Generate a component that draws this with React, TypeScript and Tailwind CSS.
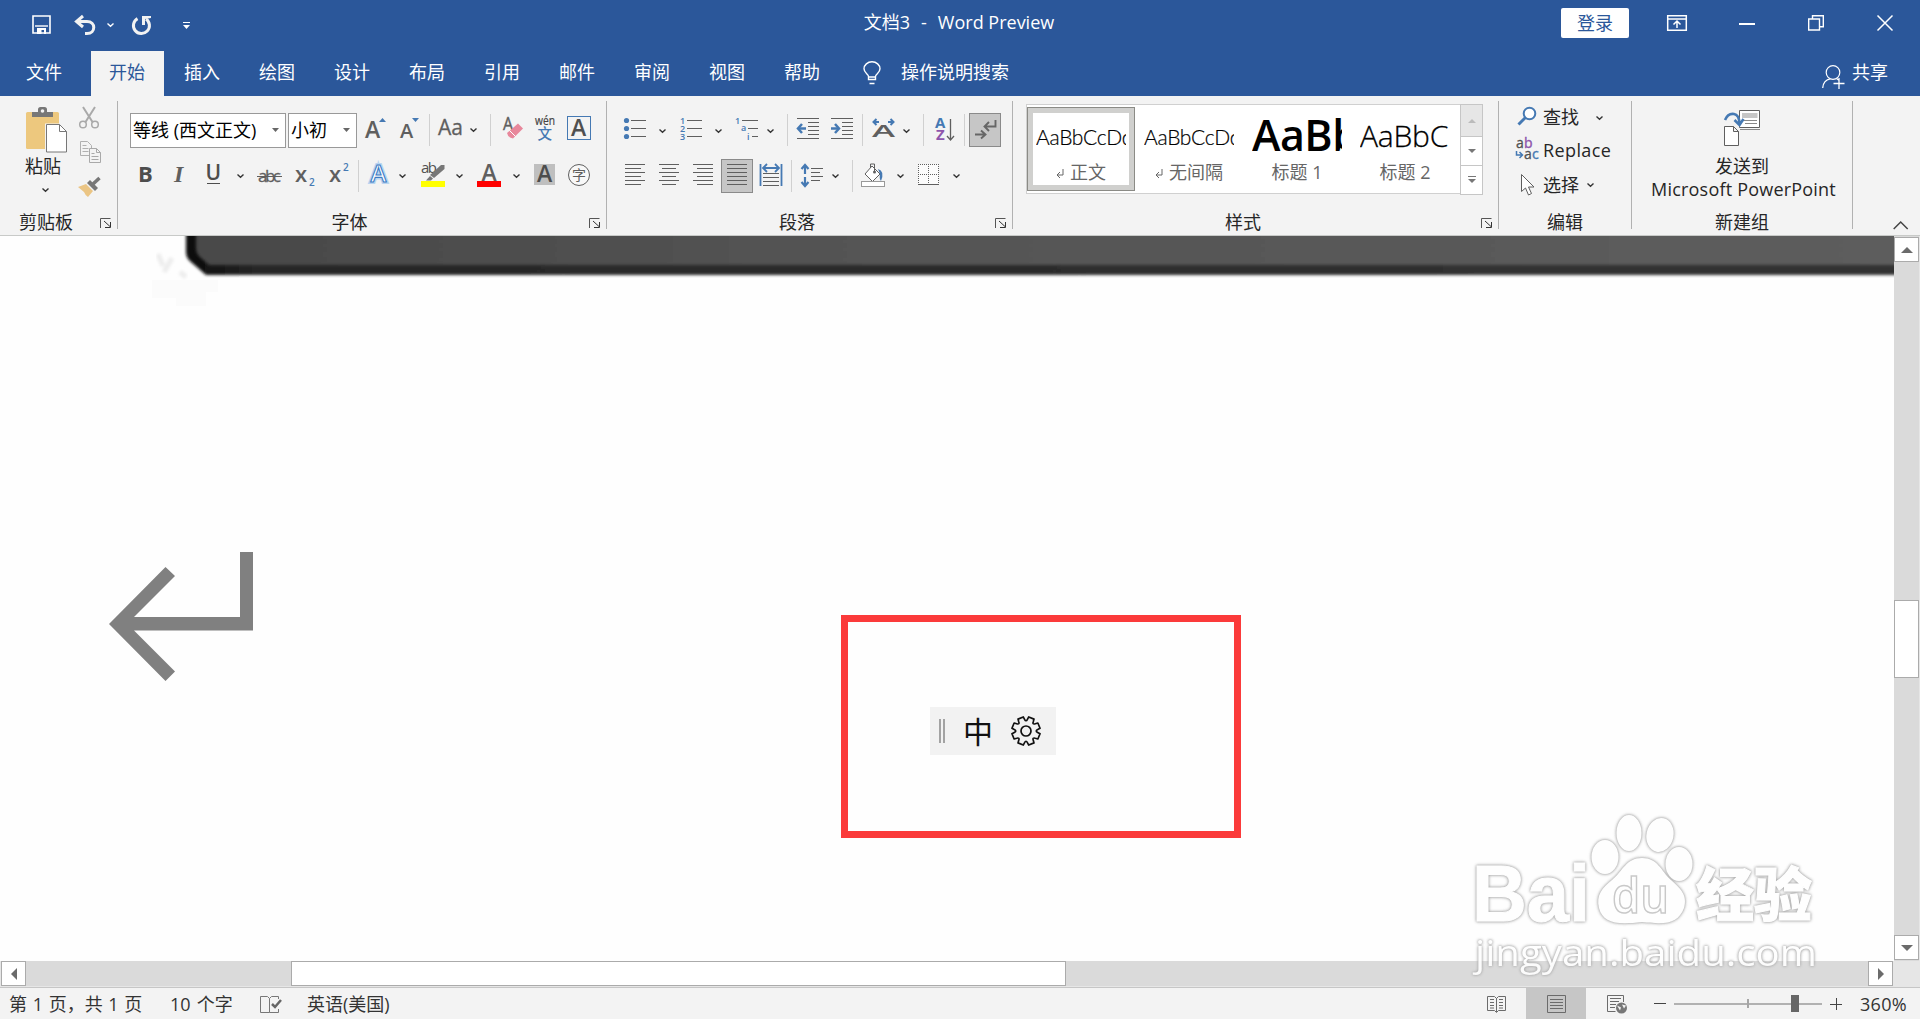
import type { ReactNode } from "react";

const BLUE = "#4579b3";
const GRAY = "#5f5f5f";
const UI = "'Open Sans', 'Noto Sans CJK SC', sans-serif";

function Svg({ w, h = 36, className = "", children }: { w: number; h?: number; className?: string; children: ReactNode }) {
  return (
    <svg width={w} height={h} viewBox={`0 0 ${w} ${h}`} className={`block shrink-0 overflow-visible ${className}`} fill="none">
      {children}
    </svg>
  );
}

function Chevron({ className = "", color = "#333" }: { className?: string; color?: string }) {
  return (
    <Svg w={7} h={4} className={className}>
      <path d="M.5 .5l3 2.7 3-2.7" stroke={color} strokeWidth="1.4" />
    </Svg>
  );
}

function Sep({ className = "" }: { className?: string }) {
  return <div className={`h-8 w-px shrink-0 bg-[#d0d0d0] ${className}`} />;
}

function Lines({ rows, x = 0, y = 0 }: { rows: number[][]; x?: number; y?: number }) {
  return (
    <g fill={GRAY}>
      {rows.map(([x1, y1, w], i) => (
        <rect key={i} x={x + x1} y={y + y1} width={w} height="1" />
      ))}
    </g>
  );
}

function Group({ label, width, launcher = false, children }: { label: string; width: string; launcher?: boolean; children: ReactNode }) {
  return (
    <div className={`flex h-[139px] shrink-0 flex-col ${width}`}>
      <div className="h-[113px]">{children}</div>
      <div className="flex h-[26px] items-center">
        <div className="flex-1 text-center leading-[26px]">{label}</div>
        {launcher && (
          <div className="w-[25px] pl-2">
            <Svg w={12} h={10} className="mt-[2px]">
              <path d="M.5 10V.5H10.5" stroke="#555" />
              <path d="M4 3l6 5.5M10.5 4v5.5H5" stroke="#333" />
            </Svg>
          </div>
        )}
      </div>
    </div>
  );
}

function GroupLine() {
  return <div className="mt-[5px] h-32 w-px shrink-0 bg-[#b1b1b1]" />;
}

function TitleBar() {
  return (
    <div className="flex h-[51px] items-start text-white">
      <div className="flex h-[51px] w-[357px]">
        <Svg w={20} h={20} className="mt-[15px] ml-8">
          <path d="M1 1h17v17H1z" stroke="#fff" strokeWidth="1.6" />
          <path d="M3 11h13" stroke="#fff" strokeWidth="1.4" />
          <path d="M5 13h9v6h-2v-4h-2.500v4H5z" fill="#fff" />
        </Svg>
        <Svg w={22} h={20} className="mt-[15px] ml-[22px]">
          <path d="M9 1L2.500 6.500 9 12" stroke="#f2f2f2" strokeWidth="3" />
          <path d="M3 6.500h10c9 0 9 12 0 12h-2" stroke="#f2f2f2" strokeWidth="3" />
        </Svg>
        <Chevron className="mt-[23px] ml-[11px]" color="#fff" />
        <Svg w={22} h={21} className="mt-[15px] ml-[17px]">
          <path d="M6.500 3.600A8 8 0 1 0 15 4" stroke="#f2f2f2" strokeWidth="3" />
          <path d="M11 1h9v2l-6 1v6h-3z" fill="#f2f2f2" />
        </Svg>
        <Svg w={8} h={8} className="mt-[22px] ml-[30px]">
          <path d="M0 0h7v1H0zM0 3h7L3.500 7z" fill="#fff" />
        </Svg>
      </div>
      <div className="flex h-[47px] flex-1 justify-center gap-[11px] leading-[45px]">
        <span>文档3</span>
        <span>-</span>
        <span>Word Preview</span>
      </div>
      <div className="flex h-[51px] w-[359px]">
        <div className="mt-2 h-[30px] w-[68px] rounded-[2px] bg-white text-center leading-[31px] text-[#2b579a]">登录</div>
        <Svg w={20} h={16} className="mt-[15px] ml-[38px]">
          <path d="M.7 .7h18.600v14.600H.7zM1 4h18M10 13V6.500M6.500 9.500L10 6l3.500 3.500" stroke="#fff" strokeWidth="1.5" />
        </Svg>
        <div className="mt-[23px] ml-[52px] h-[1.500px] w-4 bg-white" />
        <Svg w={16} h={16} className="mt-[15px] ml-[53px]">
          <path d="M.7 4h10.800v11H.7zM4.500 4V.7h10.800v11H12" stroke="#fff" strokeWidth="1.4" />
        </Svg>
        <Svg w={16} h={16} className="mt-[15px] ml-[53px]">
          <path d="M.5 .5l15 15M15.500 .5l-15 15" stroke="#fff" strokeWidth="1.5" />
        </Svg>
      </div>
    </div>
  );
}

const tabs = ["开始", "插入", "绘图", "设计", "布局", "引用", "邮件", "审阅", "视图", "帮助"];

function Tabs() {
  return (
    <div className="flex h-[45px] text-center leading-[43px] text-white">
      <div className="mr-[2px] w-[88px]">文件</div>
      {tabs.map((t, i) => (
        <div key={t} className="w-[75px] px-px">
          <div className={i === 0 ? "h-full bg-[#f3f3f3] pr-px text-[#2b579a]" : "pr-px"}>{t}</div>
        </div>
      ))}
      <Svg w={18} h={25} className="mt-[10px] ml-[23px]">
        <path d="M5.500 18.500v-3C5.500 13 1 12 1 7.800a8 7 0 0 1 16 0C17 12 12.500 13 12.500 15.500v3zM5.500 16h7M6.500 22.500h5" stroke="#fff" strokeWidth="1.4" />
      </Svg>
      <div className="ml-5">操作说明搜索</div>
      <Svg w={24} h={24} className="mt-[14px] ml-auto">
        <circle cx="11" cy="7.500" r="6.800" stroke="#fff" strokeWidth="1.2" />
        <path d="M.7 23c.3-5 3.500-8.500 7.500-9.200M14.500 13.500l2 1.500M17 13v11M11.500 18.500h11" stroke="#fff" strokeWidth="1.3" />
      </Svg>
      <div className="mr-8 ml-[6px]">共享</div>
    </div>
  );
}

function Clipboard() {
  return (
    <Group label="剪贴板" width="w-[117px]" launcher>
      <div className="flex pt-[11px]">
        <div className="w-[70px]">
          <Svg w={42} h={46} className="ml-[26px]">
            <rect y="5" width="33" height="37" rx="1.500" fill="#edc87e" />
            <path d="M6 10V5h6V2.500Q12 0 14.500 0h4Q21 0 21 2.500V5h6v5z" fill="#777" />
            <circle cx="16.500" cy="4" r="1.800" fill="#f3f3f3" />
            <path d="M19 16.500h22.500V46H19z" fill="#f3f3f3" />
            <path d="M20.500 17.500h13l7 7V45h-20z" fill="#fff" stroke="#777" />
            <path d="M33.500 17.500v7h7" stroke="#777" />
          </Svg>
          <div className="ml-[25px] leading-[27px]">粘贴</div>
          <Chevron className="mt-2 ml-[42px]" />
        </div>
        <div className="ml-2">
          <Svg w={22} h={22} className="ml-[1px]">
            <path d="M4 0l9.500 15M16 0L6.500 15" stroke="#a9a9a9" strokeWidth="2" />
            <circle cx="4" cy="17.500" r="3.300" stroke="#a9a9a9" strokeWidth="1.500" />
            <circle cx="16" cy="17.500" r="3.300" stroke="#a9a9a9" strokeWidth="1.500" />
          </Svg>
          <Svg w={22} h={22} className="mt-3 ml-[2px]">
            <path d="M.5 .5h7l4 4v10H.5zM2.500 4.500h4M2.500 7.500h6M2.500 10.500h6" stroke="#b0b0b0" />
            <path d="M9.500 7.500h7l4 4v10h-11zM16.500 7.500v4h4M11.500 12.500h3M11.500 15.500h7M11.500 18.500h7" fill="#f3f3f3" stroke="#a9a9a9" />
          </Svg>
          <Svg w={24} h={20} className="mt-[14px]">
            <path d="M0 10l8-3 7 7-5 6q-3-2-4-5z" fill="#ebc584" />
            <path d="M9 6l3-3 8 8-3 3z" fill="#777" />
            <path d="M15 7l6.500-6" stroke="#777" strokeWidth="3.500" />
          </Svg>
        </div>
      </div>
    </Group>
  );
}

function FontBox({ text, className }: { text: string; className: string }) {
  return (
    <div className={`flex h-[35px] shrink-0 items-center border border-[#999] bg-white pr-[6px] pl-[2px] leading-[32px] whitespace-nowrap ${className}`}>
      <span className="mb-px text-black">{text}</span>
      <Svg w={7} h={4} className="ml-auto">
        <path d="M0 0h7L3.500 4z" fill="#666" />
      </Svg>
    </div>
  );
}

function FontGroup() {
  return (
    <Group label="字体" width="w-[488px]" launcher>
      <div className="mt-4 flex h-9 items-center" style={{ fontFamily: UI }}>
        <FontBox text="等线 (西文正文)" className="ml-3 w-[156px]" />
        <FontBox text="小初" className="ml-[2px] w-[69px]" />
        <Svg w={24} className="ml-[6px]">
          <text x="2" y="26" fontSize="23" fontWeight="600" fill={GRAY}>A</text>
          <path d="M16 10h7l-3.500-4z" fill={BLUE} />
        </Svg>
        <Svg w={23} className="ml-[11px]">
          <text x="2" y="26" fontSize="20" fontWeight="600" fill={GRAY}>A</text>
          <path d="M14 6h7l-3.500 4z" fill={BLUE} />
        </Svg>
        <Sep className="ml-2" />
        <Svg w={26} className="ml-2">
          <text x="0" y="23" fontSize="21" fill={GRAY} stroke={GRAY} strokeWidth=".3" textLength="25">Aa</text>
        </Svg>
        <Chevron className="ml-[6px]" />
        <Sep className="ml-[13px]" />
        <Svg w={21} className="ml-3">
          <text x="0" y="18" fontSize="18" fill={GRAY} stroke={GRAY} strokeWidth=".4" textLength="10" lengthAdjust="spacingAndGlyphs">A</text>
          <path d="M4 21l11-9.500 5 5L10 26.500q-5-1-6-5.500z" fill="#e8879b" />
          <path d="M6.500 18.500l6 6" stroke="#fff" />
        </Svg>
        <Svg w={22} className="ml-[10px]">
          <text x="1" y="13" fontSize="12" fill="#444" stroke="#444" strokeWidth=".2" textLength="20" lengthAdjust="spacingAndGlyphs">wén</text>
          <text x="3.500" y="27" fontSize="14.500" fontWeight="500" fill={BLUE}>文</text>
        </Svg>
        <Svg w={24} className="ml-[11px]">
          <rect x=".5" y="4.500" width="23" height="23" stroke={BLUE} />
          <text x="4" y="24" fontSize="23" fontWeight="600" fill="#505050">A</text>
        </Svg>
      </div>
      <div className="mt-[10px] flex h-9 items-center" style={{ fontFamily: UI }}>
        <Svg w={16} className="ml-5">
          <text x="0" y="24" fontSize="22" fontWeight="700" fill="#4d4d4d">B</text>
        </Svg>
        <Svg w={14} className="ml-[18px]">
          <text x="2" y="24" fontSize="24" fontStyle="italic" fontWeight="700" fontFamily="'Liberation Serif', serif" fill={GRAY}>I</text>
        </Svg>
        <Svg w={16} className="ml-5">
          <text x="-.5" y="22" fontSize="21" fontWeight="600" fill="#4d4d4d">U</text>
          <path d="M1 25.500h13" stroke="#4d4d4d" />
        </Svg>
        <Chevron className="ml-[15px]" />
        <Svg w={26} className="ml-[13px]">
          <text x="1" y="24" fontSize="17" fill={GRAY} stroke={GRAY} strokeWidth=".3" textLength="23">abc</text>
          <path d="M0 18.500h25" stroke={GRAY} />
        </Svg>
        <Svg w={21} className="ml-3">
          <text x="0" y="24" fontSize="22" fontWeight="600" fill={GRAY}>x</text>
          <text x="14" y="28" fontSize="10" fontWeight="600" fill={BLUE}>2</text>
        </Svg>
        <Svg w={21} className="ml-[13px]">
          <text x="0" y="24" fontSize="22" fontWeight="600" fill={GRAY}>x</text>
          <text x="14" y="13" fontSize="10" fontWeight="600" fill={BLUE}>2</text>
        </Svg>
        <Sep className="ml-2" />
        <Svg w={20} className="ml-[9px]">
          <text x="2.500" y="24" fontSize="24" fontWeight="600" fill="#fff" stroke="#b9d4f0" strokeWidth="4">A</text>
          <text x="2.500" y="24" fontSize="24" fontWeight="600" fill="#fff" stroke="#3d7cc4" strokeWidth="1.100">A</text>
        </Svg>
        <Chevron className="ml-[11px]" />
        <Svg w={24} className="ml-[15px]">
          <text x="0" y="15" fontSize="15" fill="#505050" textLength="16">ab</text>
          <path d="M23.500 7v4L13 20l-4-3L20 7z" fill="#777" />
          <path d="M9 18l3 2.500-2 2H5z" fill="#777" />
          <rect y="23" width="24" height="6" fill="#ff0" />
        </Svg>
        <Chevron className="ml-[11px]" />
        <Svg w={24} className="ml-[14px]">
          <text x="4.500" y="23" fontSize="23" fontWeight="600" fill={GRAY}>A</text>
          <rect y="23" width="24" height="6" fill="#f00" />
        </Svg>
        <Chevron className="ml-3" />
        <Svg w={21} className="ml-[14px]">
          <rect y="6" width="21" height="21" fill="#bfbfbf" />
          <text x="3" y="24" fontSize="23" fontWeight="600" fill="#4d4d4d">A</text>
        </Svg>
        <Svg w={24} className="ml-3">
          <circle cx="12" cy="17" r="10.500" stroke={GRAY} fill="#f8f8f8" />
          <text x="5" y="22" fontSize="14" fill={GRAY}>字</text>
        </Svg>
      </div>
    </Group>
  );
}

function Arrow({ x, y, flip = false }: { x: number; y: number; flip?: boolean }) {
  return (
    <g transform={`translate(${x} ${y})${flip ? " scale(-1 1)" : ""}`} stroke={BLUE}>
      <path d="M0 0H8" strokeWidth="2.500" />
      <path d="M4-4.500L8 0 4 4.500" strokeWidth="2.500" />
    </g>
  );
}

const LEFT_ROWS = [[0, 6, 20], [0, 10, 16], [0, 14, 20], [0, 18, 16], [0, 22, 20], [0, 26, 16]];
const CENTER_ROWS = [[0, 6, 20], [3, 10, 14], [0, 14, 20], [3, 18, 14], [0, 22, 20], [3, 26, 14]];
const RIGHT_ROWS = [[0, 6, 20], [4, 10, 16], [0, 14, 20], [4, 18, 16], [0, 22, 20], [4, 26, 16]];
const FULL_ROWS = [[0, 5, 20], [0, 9, 20], [0, 13, 20], [0, 17, 20], [0, 21, 20], [0, 25, 20]];
const INDENT_ROWS = [[0, 6, 22], [11, 10, 11], [11, 14, 11], [11, 18, 11], [11, 22, 11], [0, 26, 22]];

function ParagraphGroup() {
  return (
    <Group label="段落" width="w-[405px]" launcher>
      <div className="mt-4 flex h-9 items-center" style={{ fontFamily: UI }}>
        <Svg w={22} className="ml-[17px]">
          <g fill={BLUE}>
            <circle cx="2.500" cy="8.500" r="2.600" />
            <circle cx="2.500" cy="16.500" r="2.600" />
            <circle cx="2.500" cy="24.500" r="2.600" />
          </g>
          <Lines rows={[[7, 8, 15], [7, 16, 15], [7, 24, 15]]} />
        </Svg>
        <Chevron className="mt-[2px] ml-[13px]" />
        <Svg w={22} className="ml-[14px]">
          <g fill={BLUE} fontSize="9" fontWeight="600">
            <text x="0" y="12">1</text>
            <text x="0" y="20">2</text>
            <text x="0" y="28">3</text>
          </g>
          <Lines rows={[[7, 8, 15], [7, 16, 15], [7, 24, 15]]} />
        </Svg>
        <Chevron className="mt-[2px] ml-[13px]" />
        <Svg w={23} className="ml-[13px]">
          <g fill={BLUE} fontSize="9" fontWeight="600">
            <text x="0" y="12">1</text>
            <text x="6" y="19">a</text>
            <text x="12" y="28">i</text>
          </g>
          <Lines rows={[[7, 8, 16], [13, 16, 10], [17, 24, 6]]} />
        </Svg>
        <Chevron className="mt-[2px] ml-[9px]" />
        <Sep className="ml-[13px]" />
        <Svg w={22} className="ml-[9px]">
          <Lines rows={INDENT_ROWS} />
          <Arrow x={9} y={16.500} flip />
        </Svg>
        <Svg w={22} className="ml-3">
          <Lines rows={INDENT_ROWS} />
          <Arrow x={0} y={16.500} />
        </Svg>
        <Sep className="ml-[9px]" />
        <Svg w={23} className="ml-[9px]">
          <path d="M7 10H1.500M4.500 7L1.500 10l3 3M16 10h5.500M18.500 7l3 3-3 3" stroke={BLUE} strokeWidth="2" />
          <text x="0" y="25" fontSize="16" fontWeight="600" fill={GRAY} textLength="23" lengthAdjust="spacingAndGlyphs">A</text>
        </Svg>
        <Chevron className="mt-[2px] ml-2" />
        <Sep className="ml-[13px]" />
        <Svg w={20} className="ml-[11px]">
          <text x="0" y="16" fontSize="15" fontWeight="700" fill={BLUE}>A</text>
          <text x="1" y="28" fontSize="15" fontWeight="700" fill="#8e55ac">Z</text>
          <path d="M15.500 7v21M12 24l3.500 4 3.500-4" stroke={GRAY} strokeWidth="1.300" />
        </Svg>
        <Sep className="ml-[9px]" />
        <div className="ml-1 h-[34px] w-8 border border-[#8a8a8a] bg-[#c6c6c6]">
          <Svg w={30} h={32}>
            <path d="M25.500 6v6.500H15M19 8l-4.500 4.500L19 17M5 20.500h10M11 16.500l4.500 4-4.500 4" stroke="#666" strokeWidth="1.900" />
          </Svg>
        </div>
      </div>
      <div className="mt-[10px] flex h-9 items-center">
        <Svg w={20} className="ml-[18px]"><Lines rows={LEFT_ROWS} /></Svg>
        <Svg w={20} className="ml-[14px]"><Lines rows={CENTER_ROWS} /></Svg>
        <Svg w={20} className="ml-[14px]"><Lines rows={RIGHT_ROWS} /></Svg>
        <div className="ml-2 h-[34px] w-8 border border-[#8a8a8a] bg-[#c6c6c6]">
          <Svg w={30} h={32}><Lines rows={FULL_ROWS} x={5} y={-1} /></Svg>
        </div>
        <Svg w={22} className="ml-[7px]">
          <path d="M.5 6v22M21.500 6v22M3 10h16M7 6l-4 4 4 4M15 6l4 4-4 4" stroke={BLUE} strokeWidth="1.800" />
          <Lines rows={[[3, 15, 16], [3, 19, 16], [3, 23, 16], [3, 27, 16]]} />
        </Svg>
        <Sep className="ml-[9px]" />
        <Svg w={22} className="ml-[9px]">
          <path d="M4 7v9M4 19v9M.5 11L4 7l3.500 4M.5 24L4 28l3.500-4" stroke={BLUE} strokeWidth="2.200" />
          <Lines rows={[[10, 10, 12], [10, 14, 9], [10, 18, 12], [10, 22, 9]]} />
        </Svg>
        <Chevron className="ml-[9px]" />
        <Sep className="ml-[13px]" />
        <Svg w={24} className="ml-2">
          <path d="M11 8l8 8-7.500 7.500L4 16z" fill="#fff" stroke={GRAY} />
          <path d="M9.500 10V6h4v8" stroke={GRAY} />
          <circle cx="13.500" cy="14" r="1.500" fill={GRAY} />
          <path d="M17 11q7 2 3 12-2-2-1-7z" fill={BLUE} />
          <rect x=".5" y="23.500" width="23" height="5" fill="#fff" stroke="#999" />
        </Svg>
        <Chevron className="ml-3" />
        <Svg w={21} className="ml-[14px]">
          <rect y="6" width="21" height="21" fill="#fbfbfb" />
          <path d="M0 6.500h21M.5 6v20M20.500 6v20M10.500 6v20M0 16.500h21" stroke={GRAY} strokeDasharray="1 1" />
          <path d="M0 26.500h21" stroke={GRAY} />
        </Svg>
        <Chevron className="ml-[14px]" />
      </div>
    </Group>
  );
}

function StyleItem({ sample, name, mark = false, sampleClass, selected = false }: { sample: string; name: string; mark?: boolean; sampleClass: string; selected?: boolean }) {
  return (
    <div className={`h-[84px] w-[108px] shrink-0 ${selected ? "border border-[#8b8b86] bg-[#d0d0ce] p-[5px]" : "p-[6px]"}`}>
      <div className="h-full bg-white px-[3px]">
        <div className="flex h-[46px] items-end overflow-hidden whitespace-nowrap text-black">
          <span className={sampleClass}>{sample}</span>
        </div>
        <div className="flex items-center justify-center leading-[27px] text-[#666]">
          {mark && (
            <Svg w={8} h={10} className="mt-[3px] mr-[6px]">
              <path d="M7 0v6H1.500M4 3L1 6l3 3" stroke="#666" />
            </Svg>
          )}
          {name}
        </div>
      </div>
    </div>
  );
}

function StylesGroup() {
  return (
    <Group label="样式" width="w-[485px]" launcher>
      <div className="mt-2 ml-[13px] flex h-[91px] w-[457px]">
        <div className="flex h-[90px] w-[434px] border border-r-0 border-[#d0d0d0] bg-white pt-[2px]">
          <StyleItem selected mark sample="AaBbCcDd" name="正文" sampleClass="font-['Lato'] text-[21px] leading-[34px] font-light tracking-[-0.3px] pb-[5px] [-webkit-text-stroke:0.2px_#000]" />
          <StyleItem mark sample="AaBbCcDd" name="无间隔" sampleClass="font-['Lato'] text-[21px] leading-[34px] font-light tracking-[-0.3px] pb-[5px] [-webkit-text-stroke:0.2px_#000]" />
          <StyleItem sample="AaBb" name="标题 1" sampleClass="font-['Open_Sans'] text-[43px] leading-[44px] font-semibold tracking-[-0.5px] pb-[2px]" />
          <StyleItem sample="AaBbC" name="标题 2" sampleClass="font-['Open_Sans'] text-[30px] leading-[36px] font-light tracking-[-0.2px] pb-[5px] [-webkit-text-stroke:0.3px_#000]" />
        </div>
        <div className="flex w-[23px] flex-col border border-[#c6c6c6] bg-white">
          <div className="flex h-[31px] items-center justify-center bg-[#e6e6e6]">
            <Svg w={8} h={4}><path d="M0 4h8L4 0z" fill="#bbb" /></Svg>
          </div>
          <div className="flex h-[29px] items-center justify-center border-t border-[#c6c6c6]">
            <Svg w={8} h={4}><path d="M0 0h8L4 4z" fill="#777" /></Svg>
          </div>
          <div className="flex h-[29px] items-center justify-center border-t border-[#c6c6c6]">
            <Svg w={8} h={8}><path d="M0 0h8v1H0zM0 3h8L4 7z" fill="#777" /></Svg>
          </div>
        </div>
      </div>
    </Group>
  );
}

function EditGroup() {
  return (
    <Group label="编辑" width="w-[132px]">
      <div className="flex flex-col pt-1 pl-[17px] leading-[34px]">
        <div className="flex h-[33px] items-center">
          <Svg w={27} h={20} className="mt-[-2px]">
            <circle cx="13.500" cy="7.500" r="5.800" stroke={BLUE} strokeWidth="2" fill="#fff" />
            <path d="M9.500 11.500L2.500 18.500" stroke={BLUE} strokeWidth="3" />
          </Svg>
          查找
          <Chevron className="mt-[2px] ml-[17px]" />
        </div>
        <div className="flex h-[34px] items-center">
          <Svg w={27} h={22}>
            <g fontFamily={UI} fontSize="14">
              <text x="0" y="9" fill="#505050" stroke="#505050" strokeWidth=".3">a</text>
              <text x="8" y="9" fill="#8e55ac" stroke="#8e55ac" strokeWidth=".4">b</text>
              <text x="8" y="20" fill="#505050" stroke="#505050" strokeWidth=".3">a</text>
              <text x="16" y="20" fill={BLUE} stroke={BLUE} strokeWidth=".4">c</text>
            </g>
            <path d="M.5 12v4H6M3.500 13L6.500 16l-3 3" stroke={BLUE} strokeWidth="1.500" />
          </Svg>
          <span className="tracking-[0.4px]">Replace</span>
        </div>
        <div className="flex h-[35px] items-center">
          <Svg w={27} h={22}>
            <path d="M5.500 .5v17l4-3.500 3 7 3-1.500-3-6.500h5.500z" fill="#fff" stroke={GRAY} />
          </Svg>
          选择
          <Chevron className="ml-2" />
        </div>
      </div>
    </Group>
  );
}

function PowerPointGroup() {
  return (
    <Group label="新建组" width="w-[220px]">
      <div className="flex flex-col items-center pt-[14px] text-center">
        <Svg w={37} h={36}>
          <path d="M15.500 .5h20v17h-20z" fill="#fff" stroke={GRAY} />
          <path d="M18 3h15.500v5H18z" fill="#c6c6c6" />
          <path d="M18 10.500h15M21 13.500h12M16 19.500h20" stroke="#888" />
          <path d="M1 10Q4 3 10 4q5 1 5.500 9M10.500 10l5 5 4-6" stroke={BLUE} strokeWidth="2.600" />
          <path d="M.5 16.500h9l5 5v14H.5zM9.500 16.500v5h5" fill="#fff" stroke={GRAY} />
        </Svg>
        <div className="mt-2 leading-[25px]">发送到</div>
        <div className="pl-[3px] leading-[20px] tracking-[0.2px] whitespace-nowrap">Microsoft PowerPoint</div>
      </div>
    </Group>
  );
}

function Ribbon() {
  return (
    <div className="flex h-[140px] border-b border-[#c8cac8] bg-[#f3f3f3] text-[#262626]">
      <Clipboard />
      <GroupLine />
      <FontGroup />
      <GroupLine />
      <ParagraphGroup />
      <GroupLine />
      <StylesGroup />
      <GroupLine />
      <EditGroup />
      <GroupLine />
      <PowerPointGroup />
      <GroupLine />
      <Svg w={16} h={9} className="mt-[125px] ml-10">
        <path d="M.7 8l7-7 7 7" stroke="#444" strokeWidth="1.500" />
      </Svg>
    </div>
  );
}

// eight wide teeth with a rounded notch between each pair
function gearPath() {
  const at = (a: number, r: number) => `${(15 + r * Math.cos(a)).toFixed(2)} ${(15 + r * Math.sin(a)).toFixed(2)}`;
  let d = "";
  for (let i = 0; i < 8; i++) {
    const mid = (i * Math.PI) / 4 + Math.PI / 8;
    d += `${i === 0 ? "M" : "L"}${at(mid - 0.27, 11.800)}L${at(mid - 0.2, 14.300)}L${at(mid + 0.2, 14.300)}L${at(mid + 0.27, 11.800)}`;
    d += `Q${at(mid + Math.PI / 8, 8.800)} ${at(mid + Math.PI / 4 - 0.27, 11.800)}`;
  }
  return d + "Z";
}

function Page() {
  return (
    <div className="relative h-[725px] w-[1894px] overflow-hidden bg-[#fefefe]">
      {/* bottom edge of the inserted picture */}
      <svg className="absolute top-0 left-0" width="1894" height="80" viewBox="0 0 1894 80">
        <defs>
          <linearGradient id="shade" x1="0" x2="1" y1="0" y2="0">
            <stop offset="0" stopColor="#484848" />
            <stop offset=".4" stopColor="#545454" />
            <stop offset="1" stopColor="#5d5d5d" />
          </linearGradient>
          <linearGradient id="rim" x1="0" x2="1" y1="0" y2="0">
            <stop offset="0" stopColor="#0a0a0a" />
            <stop offset=".04" stopColor="#262626" />
            <stop offset="1" stopColor="#333" />
          </linearGradient>
          <filter id="soft" x="-5%" y="-50%" width="110%" height="200%">
            <feGaussianBlur stdDeviation="1.800" />
          </filter>
        </defs>
        <path d="M158 18l5 12M172 22l-8 14M180 36l6 5" stroke="#ededed" strokeWidth="5" filter="url(#soft)" />
        <path d="M152 44h66v12h-12v14h-30v-8h-24z" fill="#fbfbfb" />
        <path d="M186-30V16q0 6 5 10l15 13H1930V-30z" fill="url(#rim)" filter="url(#soft)" />
        <path d="M196-30V12q0 6 5 10l8 7H1930V-30z" fill="url(#shade)" filter="url(#soft)" />
      </svg>
      <svg className="absolute top-[316px] left-[109px]" width="144" height="130" viewBox="0 0 144 130">
        <path d="M0 72L56.500 15l9.500 9L25 65h106V0h13v78.500H25l41 41-9.500 9.500z" fill="#808080" />
      </svg>
      <div className="absolute top-[379px] left-[841px] h-[223px] w-[400px] border-[7px] border-[#fb3a3a]">
        <div className="mt-[85px] ml-[82px] flex h-12 w-[126px] items-center bg-[#f2f2f2]">
          <div className="ml-[9px] h-6 w-[6px] border-x-2 border-[#a3a3a3]" />
          <span className="mt-[2px] ml-[18px] w-[30px] text-center text-[30px] leading-[46px] text-[#111]">中</span>
          <Svg w={30} h={30} className="ml-[18px]">
            <path d={gearPath()} stroke="#111" strokeWidth="1.700" strokeLinejoin="round" />
            <circle cx="15" cy="15" r="5" stroke="#111" strokeWidth="1.700" />
          </Svg>
        </div>
      </div>
    </div>
  );
}

function ScrollButton({ d }: { d: string }) {
  return (
    <div className="flex h-[25px] w-[25px] shrink-0 items-center justify-center border border-[#ababab] bg-white">
      <Svg w={12} h={12}><path d={d} fill="#6b6b6b" /></Svg>
    </div>
  );
}

function Watermark() {
  const text = { fill: "#fff", stroke: "#fff", strokeWidth: 1 };
  return (
    <svg
      className="pointer-events-none absolute top-[805px] left-[1465px] opacity-90 [filter:drop-shadow(0_0_1.5px_#999)_drop-shadow(0_0_1px_#ccc)]"
      width="370" height="185" viewBox="0 0 370 185"
    >
      <text x="7" y="116" fontSize="79" fontWeight="700" fontFamily="'Liberation Sans', sans-serif" textLength="118" lengthAdjust="spacingAndGlyphs" {...text}>Bai</text>
      <g fill="#fff">
        <ellipse cx="140" cy="52" rx="13.500" ry="17" />
        <ellipse cx="164" cy="28" rx="12.500" ry="18" />
        <ellipse cx="195" cy="30" rx="13.500" ry="17" transform="rotate(12 195 30)" />
        <ellipse cx="214" cy="59" rx="13.500" ry="17" />
        <path d="M177 53c-16 0-19 13-30 22-10 8-16 15-13 28 4 15 17 17 43 14 26 3 36 1 42-14 4-13-4-20-13-28-10-9-13-22-29-22z" />
      </g>
      <text x="147" y="108" fontSize="48" fontWeight="600" fontFamily="'Open Sans', sans-serif" fill="#fff" stroke="#c4c4c4" strokeWidth="1.500" textLength="57" lengthAdjust="spacingAndGlyphs">du</text>
      <text x="231" y="111" fontSize="58" fontWeight="900" fontFamily="'Noto Sans CJK SC', sans-serif" {...text}>经验</text>
      <text x="10" y="161" fontSize="36" fontWeight="500" fontFamily="'Open Sans', sans-serif" fill="#fff" textLength="342" lengthAdjust="spacingAndGlyphs">jingyan.baidu.com</text>
    </svg>
  );
}

function StatusBar() {
  return (
    <div className="flex h-8 items-center border-t border-[#c6c6c6] bg-[#f3f3f3] leading-[30px] whitespace-pre text-[#333]">
      <span className="ml-[9px] w-[161px] [word-spacing:1px]">第 1 页，共 1 页</span>
      <span className="w-[90px] [word-spacing:1.5px]">10 个字</span>
      <Svg w={22} h={18}>
        <path d="M9.500 17.500H.5V1.500h7l2 2zM9.500 3.500l2-2h7V4M9.500 17.500h9V14" stroke="#777" />
        <path d="M12 9l3 3 6-7" stroke="#666" strokeWidth="2.500" />
      </Svg>
      <span className="ml-[25px]">英语(美国)</span>
      <Svg w={20} h={18} className="ml-auto">
        <path d="M.5 1.500h7l2 2 2-2h7v14h-7l-2 2-2-2h-7zM9.500 3v14" stroke="#6b6b6b" />
        <path d="M3 4.500h4M3 7.500h4M3 10.500h4M3 13h4M12 4.500h4M12 7.500h4M12 10.500h4M12 13h4" stroke="#6b6b6b" />
      </Svg>
      <div className="ml-[19px] flex h-full w-[60px] items-center justify-center bg-[#c6c6c6]">
        <Svg w={19} h={18}>
          <path d="M.5 .5h18v17H.5zM3 4.500h13M3 7.500h13M3 10.500h13M3 13.500h13" stroke="#6b6b6b" />
        </Svg>
      </div>
      <Svg w={21} h={18} className="ml-[21px]">
        <path d="M16.500 7V.5H.5v16h8M3 3.500h11M3 6.500h9M3 9.500h6M3 12.500h5" stroke="#6b6b6b" />
        <circle cx="14.500" cy="13" r="5.500" fill="#777" />
        <path d="M10 10.500l4 2-1 3zM15 9.500l4 1-2 3z" fill="#f3f3f3" />
      </Svg>
      <div className="ml-[26px] h-px w-3 bg-[#444]" />
      <div className="relative ml-2 h-[2px] w-[148px] bg-[#b1b1b1]">
        <div className="absolute top-[-4px] left-[73px] h-[9px] w-[2px] bg-[#a6a6a6]" />
        <div className="absolute top-[-8px] left-[117px] h-[17px] w-2 bg-[#666]" />
      </div>
      <Svg w={12} h={12} className="ml-2">
        <path d="M0 6.500h12M6.500 0v12" stroke="#444" />
      </Svg>
      <span className="mr-[10px] ml-[18px] w-[50px] tracking-[0.3px]">360%</span>
    </div>
  );
}

export default function App() {
  return (
    <div className="relative h-[1019px] w-[1920px] overflow-hidden bg-[#f3f3f3] font-['Open_Sans','Noto_Sans_CJK_SC',sans-serif] text-[18px]">
      <div className="bg-[#2b579a]">
        <TitleBar />
        <Tabs />
      </div>
      <Ribbon />
      <div className="flex h-[725px]">
        <Page />
        <div className="flex w-[26px] flex-col border-r border-[#e6e6e6] bg-[#dadada] py-px">
          <ScrollButton d="M0 9h12L6 3z" />
          <div className="mt-[338px] h-[78px] w-[25px] border border-[#ababab] bg-white" />
          <div className="mt-auto">
            <ScrollButton d="M0 3h12L6 9z" />
          </div>
        </div>
      </div>
      <div className="flex h-[26px] bg-[#e6e6e6] pl-px">
        <ScrollButton d="M9 0v12L3 6z" />
        <div className="h-[25px] w-[1842px] bg-[#dadada] pl-[265px]">
          <div className="h-[25px] w-[775px] border border-[#ababab] bg-white" />
        </div>
        <ScrollButton d="M3 0v12l6-6z" />
      </div>
      <StatusBar />
      <Watermark />
    </div>
  );
}
